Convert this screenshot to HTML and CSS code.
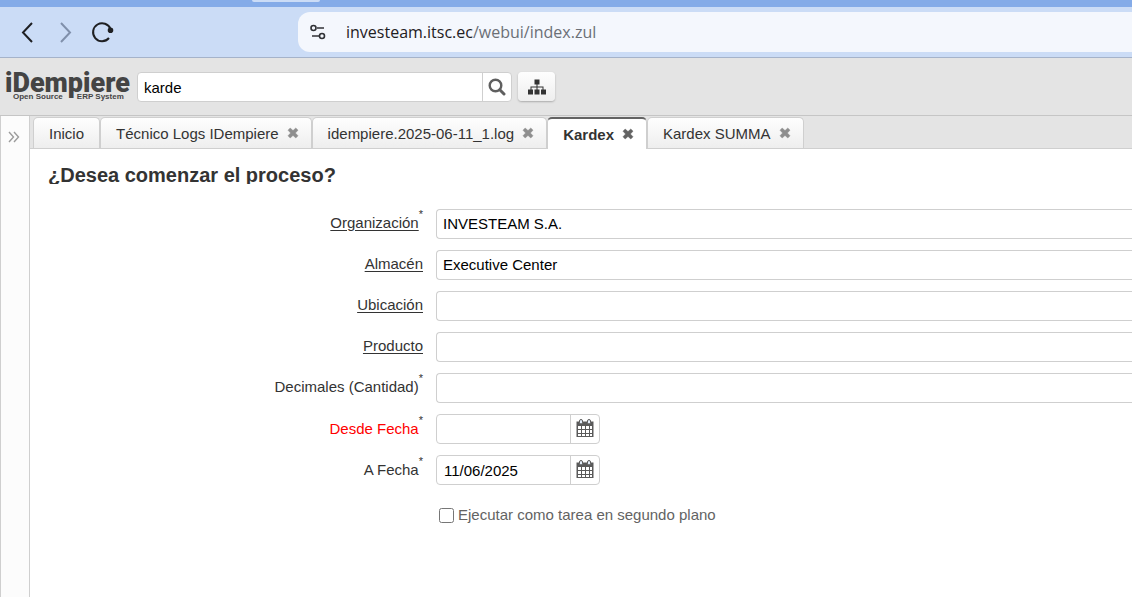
FILE: index.html
```html
<!DOCTYPE html>
<html lang="es">

	<head>
		<meta charset="UTF-8">
		<title>iDempiere</title>
		<link rel="stylesheet" href="styles.css">
	</head>

	<body>
		<svg class="sprite" width="0" height="0" aria-hidden="true">
			<symbol id="close" viewBox="0 0 12 12">
				<path d="M1 3.200L3.200 1 6 3.600 8.800 1 11 3.200 8.400 6 11 8.800 8.800 11 6 8.400 3.200 11 1 8.800 3.600 6z" fill="currentColor" stroke="currentColor" stroke-width="0.500" stroke-linejoin="round" />
			</symbol>
			<symbol id="calendar" viewBox="0 0 18 20">
				<path d="M0.500 3.500h17V19h-17z" fill="#5a5a5a" />
				<path d="M2 8h3v3H2zM6 8h3v3H6zM10 8h3v3h-3zM14 8h2v3h-2zM2 12h3v3H2zM6 12h3v3H6zM10 12h3v3h-3zM14 12h2v3h-2zM2 16h3v2H2zM6 16h3v2H6zM10 16h3v2h-3zM14 16h2v2h-2z" fill="#fff" />
				<rect x="3.500" y="1.500" width="3" height="4.500" rx="1.500" fill="#e4eefa" stroke="#5a5a5a" />
				<rect x="11.500" y="1.500" width="3" height="4.500" rx="1.500" fill="#e4eefa" stroke="#5a5a5a" />
			</symbol>
		</svg>

		<div class="browser-strip">
			<div class="browser-tab"></div>
		</div>
		<div class="browser-bar">
			<div class="browser-nav">
				<button class="nav-btn" aria-label="Atrás">
					<svg width="24" height="24" viewBox="0 0 24 24" fill="none" stroke="#1f2023" stroke-width="2"><path d="M17 3L8 12.500 17 22" /></svg>
				</button>
				<button class="nav-btn forward" aria-label="Adelante">
					<svg width="24" height="24" viewBox="0 0 24 24" fill="none" stroke="#8090ab" stroke-width="2"><path d="M8 3L17 12.500 8 22" /></svg>
				</button>
				<button class="nav-btn" aria-label="Recargar">
					<svg width="24" height="24" viewBox="0 0 24 24" fill="none" stroke="#1f2023" stroke-width="2"><path d="M18 18A9 9 0 1 1 19.500 9" /><circle cx="19.500" cy="10.200" r="1.800" fill="#1f2023" /></svg>
				</button>
			</div>
			<div class="address">
				<svg width="16" height="16" viewBox="0 0 16 16" fill="none" stroke="#303236" stroke-width="1.600"><circle cx="3.500" cy="4" r="2.500" /><path d="M7 4h7M2 12h7" /><circle cx="12" cy="12" r="2.500" /></svg>
				<span class="url">investeam.itsc.ec<span class="path">/webui/index.zul</span></span>
			</div>
		</div>

		<header class="header">
			<div class="logo">
				<div class="logo-name">iDempiere</div>
				<div class="logo-sub"><span>Open Source</span><span>ERP System</span></div>
			</div>
			<div class="search">
				<input type="text" class="search-input" value="karde" aria-label="Buscar">
				<button class="search-btn" aria-label="Buscar">
					<svg width="18" height="18" viewBox="0 0 18 18" fill="none" stroke="#5f5f5f"><circle cx="7.500" cy="7.500" r="5.800" stroke-width="2.400" /><path d="M11.800 11.800L16 16" stroke-width="3" stroke-linecap="round" /></svg>
				</button>
			</div>
			<button class="menu-btn" aria-label="Menú">
				<svg width="18" height="16" viewBox="0 0 18 16" fill="#333"><path d="M6.500 0.500h5v5h-5zM8.500 5h1v3h-1zM2.500 7.500h13v1h-13zM2.500 8h1v3h-1zM8.500 8h1v3h-1zM14.500 8h1v3h-1zM0 10.500h5v5H0zM6.500 10.500h5v5h-5zM13 10.500h5v5h-5z" /></svg>
			</button>
		</header>

		<div class="desktop">
			<aside class="side">
				<button class="side-btn" aria-label="Expandir">
					<svg width="12" height="12" viewBox="0 0 12 12" fill="none" stroke="#9c9c9c" stroke-width="1.400"><path d="M1 1l4.500 5L1 11M6 1l4.500 5L6 11" /></svg>
				</button>
			</aside>
			<main class="main">
				<nav class="tabs">
					<div class="tab home"><span>Inicio</span></div>
					<div class="tab"><span>Técnico Logs IDempiere</span><button class="tab-close" aria-label="Cerrar"><svg width="12" height="12"><use href="#close" /></svg></button></div>
					<div class="tab"><span>idempiere.2025-06-11_1.log</span><button class="tab-close" aria-label="Cerrar"><svg width="12" height="12"><use href="#close" /></svg></button></div>
					<div class="tab active"><span>Kardex</span><button class="tab-close" aria-label="Cerrar"><svg width="12" height="12"><use href="#close" /></svg></button></div>
					<div class="tab"><span>Kardex SUMMA</span><button class="tab-close" aria-label="Cerrar"><svg width="12" height="12"><use href="#close" /></svg></button></div>
				</nav>

				<form class="process">
					<h1 class="title">¿Desea comenzar el proceso?</h1>
					<div class="row">
						<label for="org"><u>Organización</u><sup>*</sup></label>
						<input type="text" class="field" id="org" value="INVESTEAM S.A.">
					</div>
					<div class="row">
						<label for="almacen"><u>Almacén</u></label>
						<input type="text" class="field" id="almacen" value="Executive Center">
					</div>
					<div class="row">
						<label for="ubicacion"><u>Ubicación</u></label>
						<input type="text" class="field" id="ubicacion">
					</div>
					<div class="row">
						<label for="producto"><u>Producto</u></label>
						<input type="text" class="field" id="producto">
					</div>
					<div class="row">
						<label for="decimales">Decimales (Cantidad)<sup>*</sup></label>
						<input type="text" class="field" id="decimales">
					</div>
					<div class="row date">
						<label for="desde"><span class="required">Desde Fecha</span><sup>*</sup></label>
						<div class="datebox">
							<input type="text" class="date-input" id="desde">
							<button type="button" class="date-btn" aria-label="Calendario"><svg width="18" height="20"><use href="#calendar" /></svg></button>
						</div>
					</div>
					<div class="row date">
						<label for="hasta">A Fecha<sup>*</sup></label>
						<div class="datebox">
							<input type="text" class="date-input" id="hasta" value="11/06/2025">
							<button type="button" class="date-btn" aria-label="Calendario"><svg width="18" height="20"><use href="#calendar" /></svg></button>
						</div>
					</div>
					<div class="background">
						<input type="checkbox" id="segundo">
						<label for="segundo">Ejecutar como tarea en segundo plano</label>
					</div>
				</form>
			</main>
		</div>
	</body>

</html>
```
FILE: styles.css
```css
* {
	padding: 0;
	margin: 0;
	box-sizing: border-box;
}

body {
	display: flex;
	flex-direction: column;
	min-height: 100vh;
	font-family: "Liberation Sans", Arial, sans-serif;
	font-size: 15px;
	color: #333;
	background: #fff;
}

button,
input {
	font: inherit;
	border: 0;
	outline: 0;
}

button {
	display: flex;
	align-items: center;
	justify-content: center;
	background: none;
	cursor: pointer;
}

svg {
	display: block;
}

.sprite {
	position: absolute;
}

/* browser */
.browser-strip {
	height: 7px;
	padding-left: 252px;
	background: #84abe8;
}

.browser-tab {
	width: 68px;
	height: 2px;
	border-radius: 0 0 6px 6px;
	background: #cbdcf6;
}

.browser-bar {
	display: flex;
	height: 51px;
	padding: 5px 0;
	background: #cbdcf6;
	border-bottom: 1px solid #a5b3ca;
}

.browser-nav {
	display: flex;
	align-items: center;
	gap: 14px;
	width: 298px;
	padding-left: 15px;
}

.address {
	display: flex;
	flex: 1;
	align-items: center;
	gap: 20px;
	height: 40px;
	padding-left: 12px;
	border-radius: 12px 0 0 12px;
	background: #f4f7fd;
}

.url {
	font-family: "Open Sans", "Noto Sans", sans-serif;
	font-size: 16px;
	line-height: 24px;
	color: #1f2023;
}

.path {
	color: #6b6f76;
}

/* header */
.header {
	display: flex;
	align-items: center;
	height: 57px;
	padding-left: 5px;
	background: #e4e4e4;
}

.logo {
	width: 132px;
	font-weight: bold;
	color: #444;
}

.logo-name {
	font-family: Roboto, "Liberation Sans", sans-serif;
	font-size: 27px;
	font-weight: 900;
	line-height: 20px;
}

.logo-sub {
	display: flex;
	gap: 14px;
	padding-left: 8px;
	font-size: 8px;
	line-height: 8px;
}

.search {
	display: flex;
	width: 375px;
	height: 30px;
	border: 1px solid #cfcfcf;
	border-radius: 4px;
	background: #fff;
}

.search-input {
	flex: 1;
	min-width: 0;
	padding: 2px 6px 0;
	background: none;
}

.search-btn {
	width: 29px;
	border-left: 1px solid #cfcfcf;
}

.menu-btn {
	width: 37px;
	height: 29px;
	margin-left: 6px;
	border-radius: 4px;
	background: linear-gradient(#fefefe, #eee);
	box-shadow: 0 1px 2px #aaa;
}

/* desktop */
.desktop {
	display: flex;
	flex: 1;
	border-top: 1px solid #c5c5c5;
}

.side {
	width: 30px;
	padding-top: 15px;
	border: 1px solid #cfcfcf;
	border-width: 0 1px;
	background: #fcfcfc;
}

.side-btn {
	width: 26px;
	height: 12px;
}

.main {
	flex: 1;
	min-width: 0;
}

.tabs {
	display: flex;
	height: 33px;
	padding: 1px 0 0 3px;
	background: #e4e4e4;
	border-bottom: 1px solid #cfcfcf;
}

.tab {
	display: flex;
	align-items: center;
	gap: 8px;
	padding: 0 12px 0 15px;
	border: 1px solid #cfcfcf;
	border-width: 1px 1px 0;
	border-radius: 5px 5px 0 0;
	background: linear-gradient(#fefefe, #eee);
	white-space: nowrap;
}

.tab.home {
	padding: 0 15px;
}

.tab-close {
	color: #8e8e8e;
}

.tab.active {
	height: 32px;
	border-top: 2px solid #636363;
	background: #fff;
	font-weight: bold;
}

.active .tab-close {
	color: #636363;
}

/* process form */
.process {
	padding: 14px 0 0 18px;
}

.title {
	height: 21px;
	margin-bottom: 25px;
	font-size: 20px;
	line-height: 24px;
	overflow: hidden;
}

.row {
	display: grid;
	grid-template-columns: 375px 1fr;
	gap: 13px;
	height: 30px;
	margin-bottom: 11px;
}

.row label {
	line-height: 28px;
	text-align: right;
}

.row.date label {
	line-height: 30px;
}

.row u {
	text-underline-offset: 2px;
}

sup {
	font-size: 11px;
	line-height: 0;
	vertical-align: 10px;
}

.required {
	color: #f00;
}

.field {
	width: 100%;
	padding: 0 6px 2px;
	border: 1px solid #cfcfcf;
	border-right: 0;
	border-radius: 4px 0 0 4px;
}

.datebox {
	display: flex;
	width: 164px;
	border: 1px solid #cfcfcf;
	border-radius: 4px;
}

.date-input {
	flex: 1;
	min-width: 0;
	padding: 0 7px;
	background: none;
}

.date-btn {
	width: 29px;
	padding-bottom: 2px;
	border-left: 1px solid #cfcfcf;
}

.background {
	display: flex;
	align-items: center;
	gap: 4px;
	padding: 10px 0 0 391px;
	line-height: 18px;
	color: #636363;
}

.background input {
	width: 15px;
	height: 15px;
}
```
